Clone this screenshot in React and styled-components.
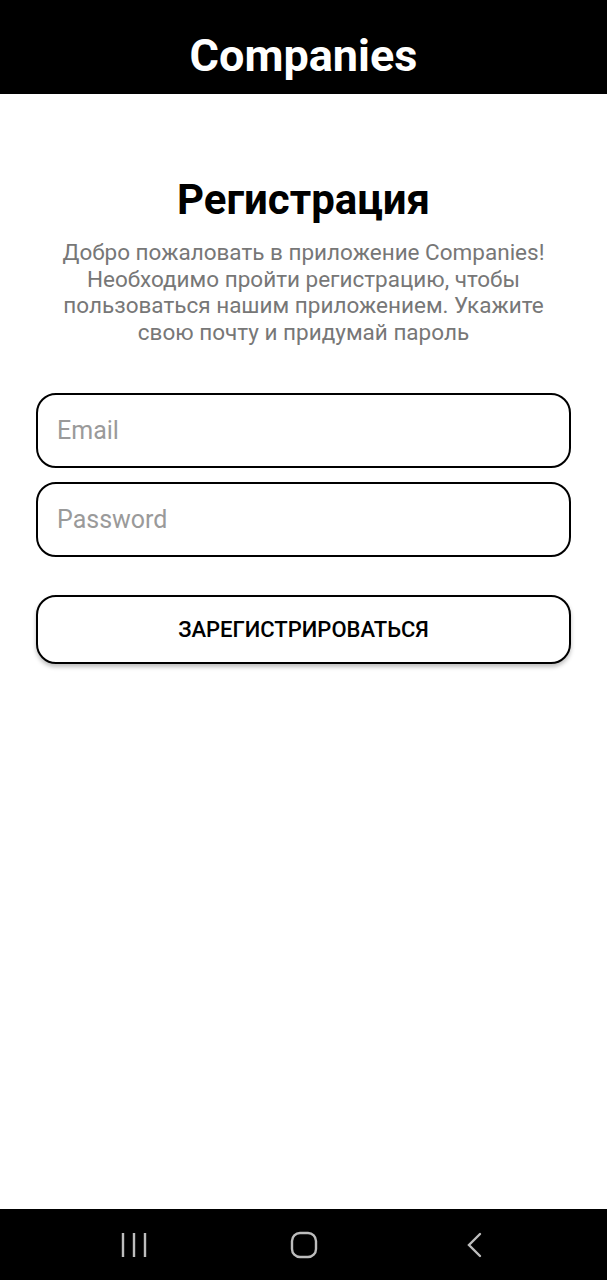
import React from "react";
import styled, { createGlobalStyle } from "styled-components";

const GlobalStyle = createGlobalStyle`
  html, body {
    margin: 0;
    padding: 0;
    background: #fff;
    font-family: Roboto, "Noto Sans", sans-serif;
  }
`;

const Screen = styled.div`
  width: 607px;
  height: 1280px;
  display: flex;
  flex-direction: column;
  background: #fff;
`;

const Header = styled.header`
  height: 94px;
  background: #000;
  display: flex;
  align-items: center;
  justify-content: center;
  padding-top: 16px;
  box-sizing: border-box;
`;

const HeaderTitle = styled.h1`
  margin: 0;
  color: #fff;
  font-size: 45px;
  font-weight: 700;
`;

const Content = styled.main`
  flex: 1;
  display: flex;
  flex-direction: column;
  padding: 0 36px;
`;

const Title = styled.h2`
  margin: 80px 0 0;
  text-align: center;
  font-size: 42px;
  font-weight: 700;
  color: #000;
  line-height: 52px;
`;

const Lead = styled.p`
  margin: 13px 0 0;
  text-align: center;
  font-size: 22.5px;
  line-height: 26.5px;
  color: #777;
`;

const Form = styled.form`
  display: flex;
  flex-direction: column;
  gap: 14px;
  margin-top: 48px;
`;

const Field = styled.input`
  height: 75px;
  box-sizing: border-box;
  border: 2px solid #000;
  border-radius: 20px;
  padding: 0 19px;
  font-family: inherit;
  font-size: 25px;
  outline: none;
  &::placeholder {
    color: #9a9a9a;
  }
`;

const Submit = styled.button`
  margin-top: 24px;
  height: 69px;
  border: 2px solid #000;
  border-radius: 20px;
  background: #fff;
  font-family: inherit;
  font-size: 22px;
  font-weight: 500;
  color: #000;
  box-shadow: 0 3px 4px rgba(0, 0, 0, 0.25);
`;

const NavBar = styled.nav`
  height: 71px;
  background: #000;
  display: flex;
  align-items: center;
  justify-content: center;
  gap: 140px;
`;

const NavIcon = styled.svg`
  width: 30px;
  height: 30px;
`;

export default function App() {
  return (
    <>
      <GlobalStyle />
      <Screen>
        <Header>
          <HeaderTitle>Companies</HeaderTitle>
        </Header>
        <Content>
          <Title>Регистрация</Title>
          <Lead>
            Добро пожаловать в приложение Companies!
            <br />
            Необходимо пройти регистрацию, чтобы
            <br />
            пользоваться нашим приложением. Укажите
            <br />
            свою почту и придумай пароль
          </Lead>
          <Form onSubmit={(e) => e.preventDefault()}>
            <Field type="email" placeholder="Email" />
            <Field type="password" placeholder="Password" />
            <Submit type="submit">ЗАРЕГИСТРИРОВАТЬСЯ</Submit>
          </Form>
        </Content>
        <NavBar>
          <NavIcon viewBox="0 0 30 30" fill="none" stroke="#bdbdbd" strokeWidth="2.4">
            <path d="M4 3v24M15 3v24M26 3v24" />
          </NavIcon>
          <NavIcon viewBox="0 0 30 30" fill="none" stroke="#bdbdbd" strokeWidth="2.4">
            <rect x="3" y="3" width="24" height="24" rx="8" />
          </NavIcon>
          <NavIcon viewBox="0 0 30 30" fill="none" stroke="#bdbdbd" strokeWidth="2.4" strokeLinecap="round">
            <path d="M21 4L10 15l11 11" />
          </NavIcon>
        </NavBar>
      </Screen>
    </>
  );
}
